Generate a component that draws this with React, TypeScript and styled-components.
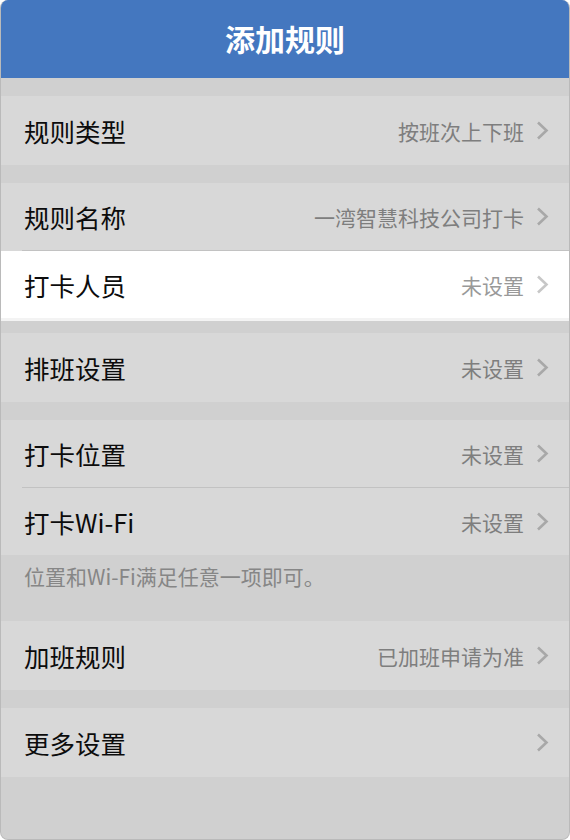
import React from "react"
import styled, { createGlobalStyle } from "styled-components"

type RowItem = {
    label: string;
    value?: string;
    active?: boolean;
}

type Group = {
    gap: number;
    rows: RowItem[];
    note?: string;
}

const groups: Group[] = [
    { gap: 18, rows: [{ label: "规则类型", value: "按班次上下班" }] },
    {
        gap: 18,
        rows: [
            { label: "规则名称", value: "一湾智慧科技公司打卡" },
            { label: "打卡人员", value: "未设置", active: true },
        ],
    },
    { gap: 12, rows: [{ label: "排班设置", value: "未设置" }] },
    {
        gap: 18,
        rows: [
            { label: "打卡位置", value: "未设置" },
            { label: "打卡Wi-Fi", value: "未设置" },
        ],
        note: "位置和Wi-Fi满足任意一项即可。",
    },
    { gap: 0, rows: [{ label: "加班规则", value: "已加班申请为准" }] },
    { gap: 18, rows: [{ label: "更多设置" }] },
]

const Chevron = ({ color }: { color: string }) => (
    <svg width="13" height="19" viewBox="0 0 13 19">
        <polyline points="2,1.5 10.5,9.5 2,17.5" fill="none" stroke={color} strokeWidth="2.6" />
    </svg>
)

const App: React.FC = () => {
    return (
        <>
            <GlobalStyle />
            <Frame>
                <Header>添加规则</Header>
                {groups.map((group, gi) => (
                    <Section key={gi} $gap={group.gap}>
                        {group.rows.map((row, ri) => {
                            const grouped = group.rows.length > 1
                            return (
                                <React.Fragment key={row.label}>
                                    {ri > 0 && <Divider />}
                                    <Row $active={!!row.active} $height={grouped ? 67 : 69}>
                                        <Label>{row.label}</Label>
                                        <Value $active={!!row.active}>{row.value}</Value>
                                        <Chevron color={row.active ? "#c7c7c7" : "#a8a8a8"} />
                                    </Row>
                                </React.Fragment>
                            )
                        })}
                        {group.note && <Note>{group.note}</Note>}
                    </Section>
                ))}
            </Frame>
        </>
    )
}

const GlobalStyle = createGlobalStyle`
    html, body {
        margin: 0;
        padding: 0;
        background: #ffffff;
    }
    * {
        box-sizing: border-box;
    }
`;

const Frame = styled.div`
    width: 570px;
    height: 840px;
    border: 1px solid rgba(0, 0, 0, 0.1);
    border-top: none;
    border-radius: 8px;
    overflow: hidden;
    background: #d0d0d0;
    display: flex;
    flex-direction: column;
    font-family: "Noto Sans CJK SC", "Noto Sans", sans-serif;
`;

const Header = styled.div`
    height: 78px;
    flex-shrink: 0;
    margin: 0 -1px;
    background: #4477bf;
    color: #ffffff;
    font-size: 30px;
    font-weight: 700;
    display: flex;
    align-items: center;
    justify-content: center;
    padding-bottom: 2px;
`;

const Section = styled.div<{ $gap: number }>`
    margin-top: ${p => p.$gap}px;
    display: flex;
    flex-direction: column;
`;

const Row = styled.div<{ $active: boolean; $height: number }>`
    height: ${p => p.$height + (p.$active ? 3 : 0)}px;
    display: flex;
    align-items: center;
    padding: 0 20px 0 23px;
    background: ${p => (p.$active ? "#ffffff" : "#d8d8d8")};
    border-bottom: ${p => (p.$active ? "3px solid #f3f3f3" : "none")};
    margin: ${p => (p.$active ? "0 -1px" : "0")};
    padding-left: ${p => (p.$active ? "24px" : "23px")};
    padding-right: ${p => (p.$active ? "21px" : "20px")};
`;

const Label = styled.span`
    flex: 1;
    font-size: 25.5px;
    color: #0c0c0c;
    white-space: nowrap;
`;

const Value = styled.span<{ $active: boolean }>`
    font-size: 21px;
    color: ${p => (p.$active ? "#999999" : "#7e7e7e")};
    margin-right: 12px;
    white-space: nowrap;
`;

const Divider = styled.div`
    height: 1px;
    background: linear-gradient(to right, #d8d8d8 21px, #c2c2c2 21px);
`;

const Note = styled.div`
    height: 66px;
    padding: 6px 0 0 23px;
    font-size: 21px;
    line-height: 30px;
    color: #868686;
`;

export default App;
